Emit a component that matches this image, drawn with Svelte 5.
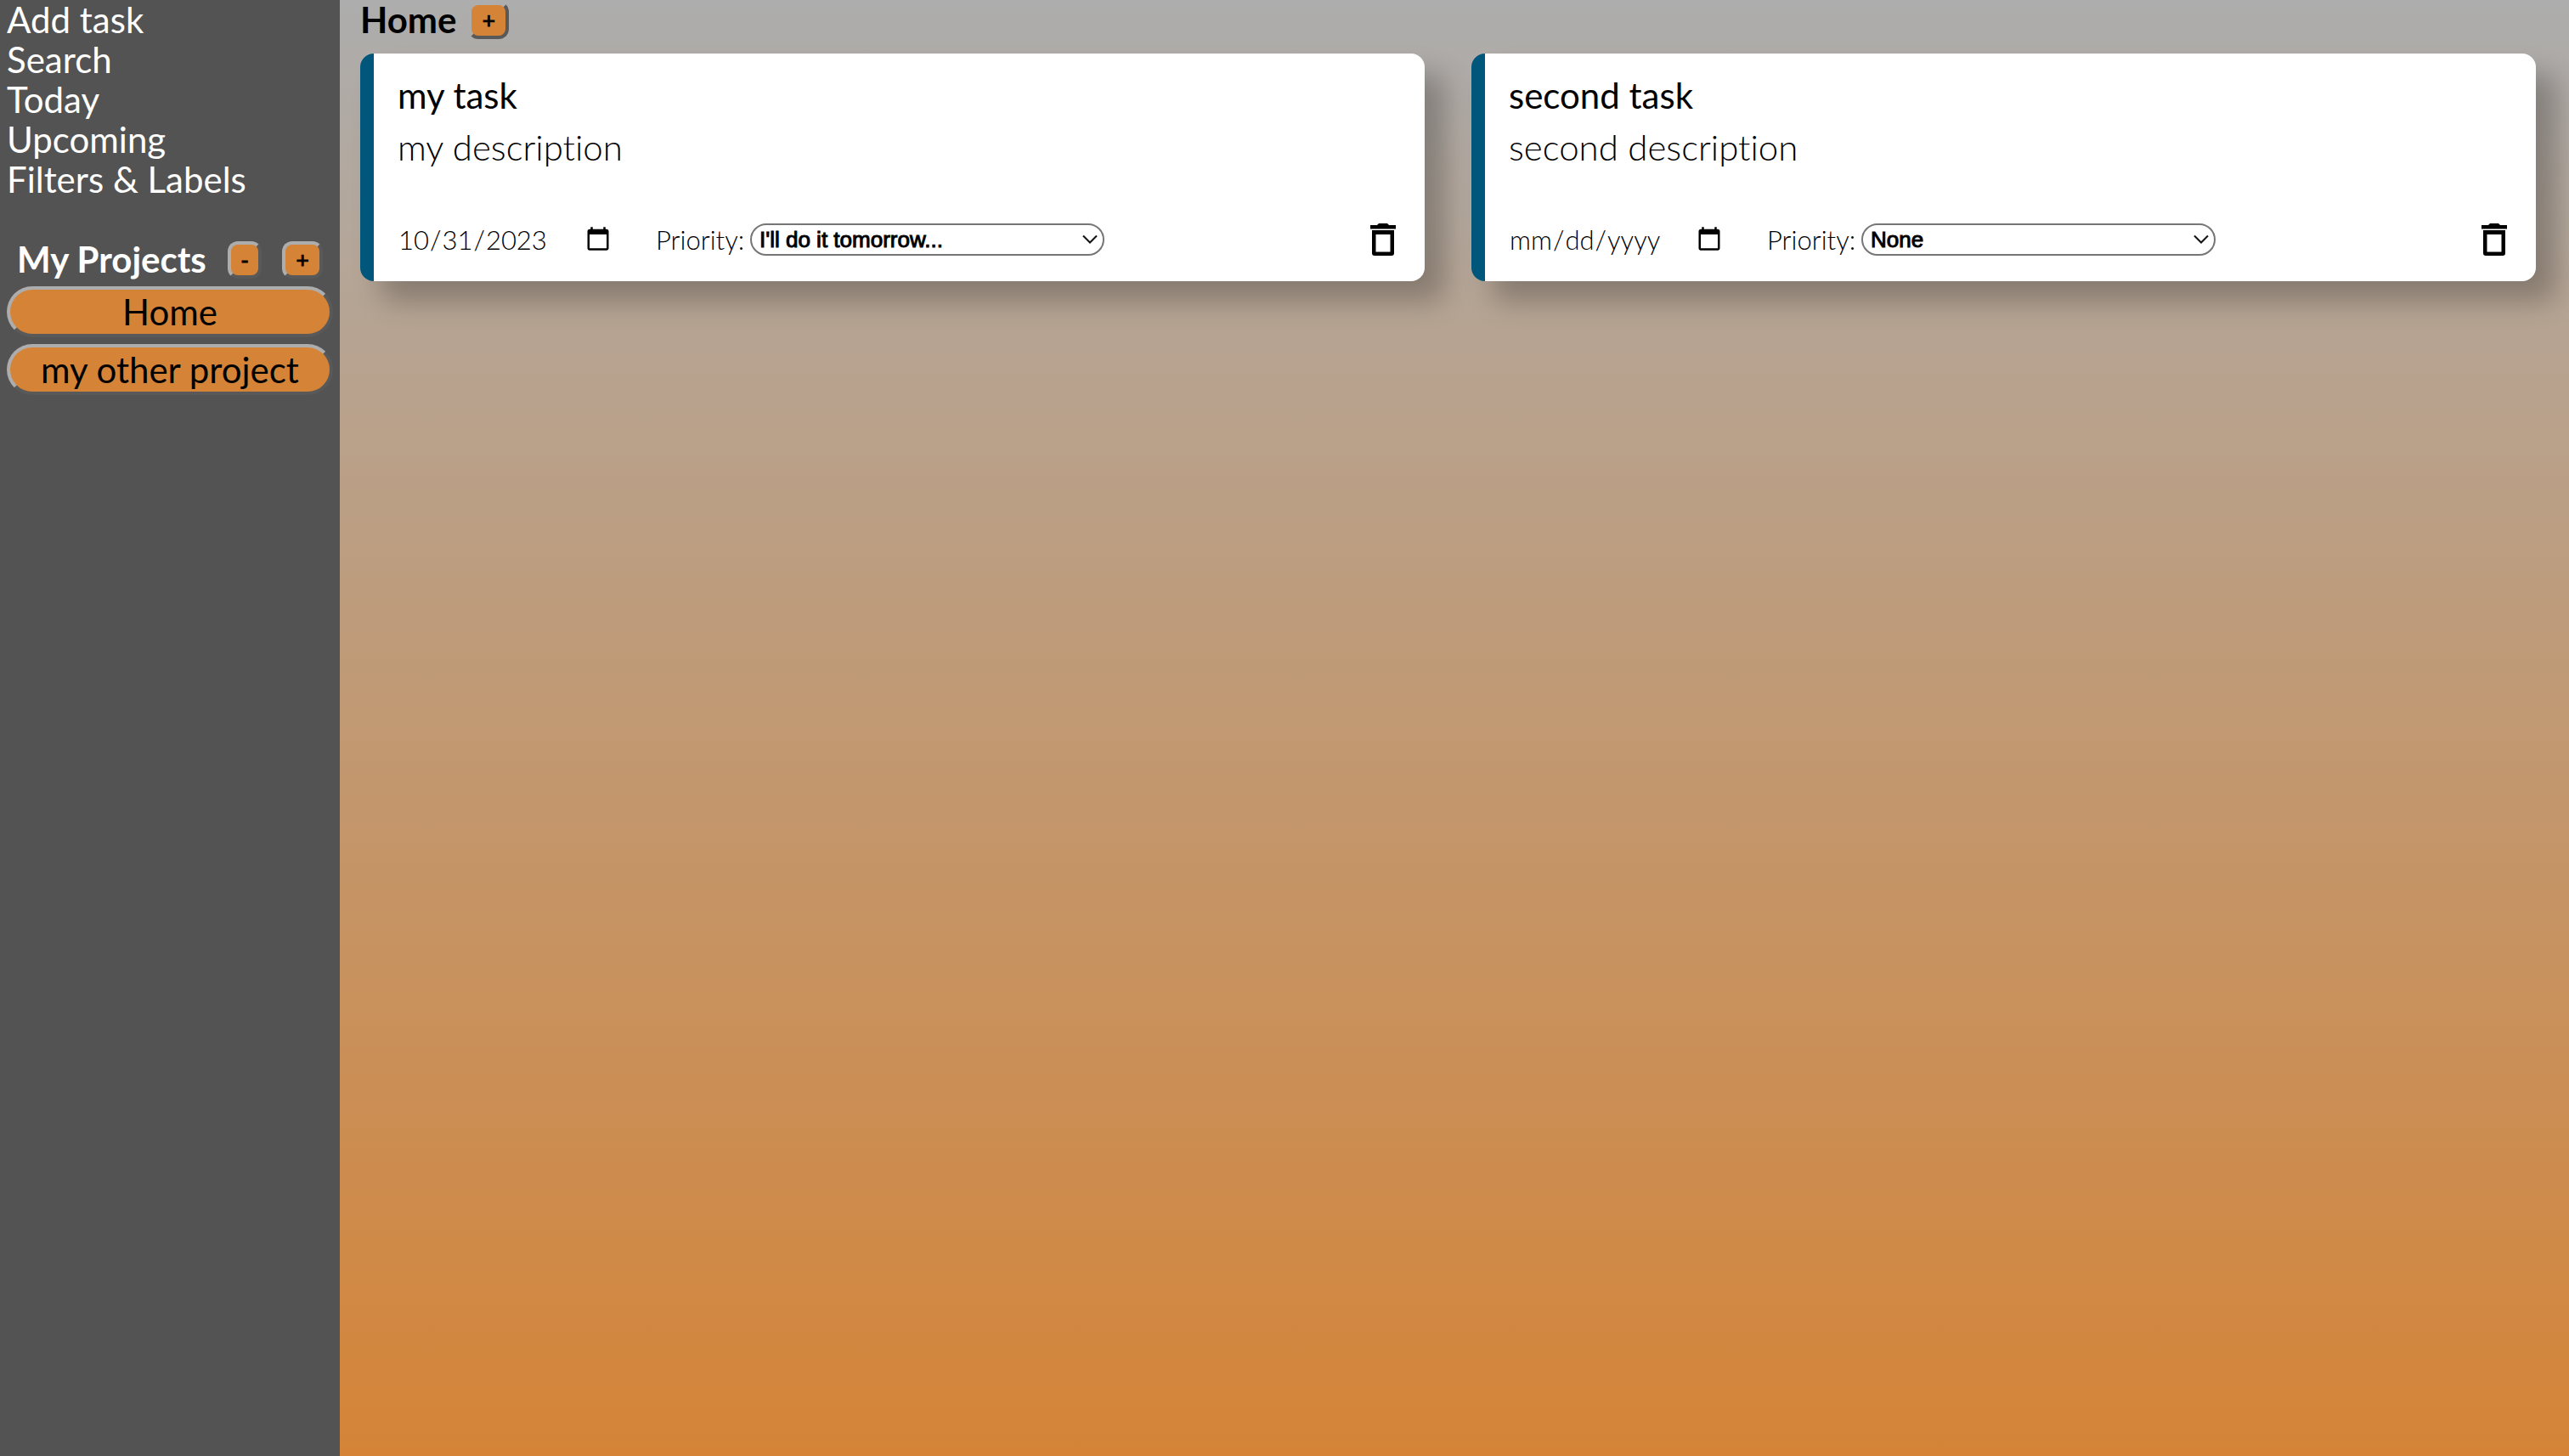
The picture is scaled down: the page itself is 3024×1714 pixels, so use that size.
<script>
  const links = ['Add task', 'Search', 'Today', 'Upcoming', 'Filters & Labels'];
  const projects = ['Home', 'my other project'];
  const priorities = ['None', "I'll do it tomorrow...", 'Soon', 'Urgent'];

  let tasks = $state([
    { id: 1, title: 'my task', description: 'my description', due: '2023-10-31', priority: "I'll do it tomorrow..." },
    { id: 2, title: 'second task', description: 'second description', due: '', priority: 'None' }
  ]);
</script>

<div class="app">
  <aside class="sidebar">
    <nav class="links" aria-label="Main">
      {#each links as link}
        <a href="#top">{link}</a>
      {/each}
    </nav>

    <div class="projects-head">
      <h2>My Projects</h2>
      <button class="square minus" type="button" aria-label="Remove project">-</button>
      <button class="square" type="button" aria-label="Add project">+</button>
    </div>

    <div class="projects">
      {#each projects as project}
        <button class="project" type="button">{project}</button>
      {/each}
    </div>
  </aside>

  <main class="content">
    <header class="content-head">
      <h1>Home</h1>
      <button class="square" type="button" aria-label="Add task to project">+</button>
    </header>

    <section class="cards">
      {#each tasks as task (task.id)}
        <article class="card">
          <h3>{task.title}</h3>
          <p class="description">{task.description}</p>
          <div class="card-foot">
            <input class="date" type="date" aria-label="Due date" bind:value={task.due} />
            <label class="priority-label" for="priority-{task.id}">Priority:</label>
            <span class="select-wrap">
              <select id="priority-{task.id}" bind:value={task.priority}>
                {#each priorities as priority}
                  <option value={priority}>{priority}</option>
                {/each}
              </select>
              <svg class="chevron" viewBox="0 0 18 12" aria-hidden="true">
                <path d="M1 1.5 L9 9.5 L17 1.5" fill="none" stroke="#111" stroke-width="2" />
              </svg>
            </span>
            <button class="delete" type="button" aria-label="Delete task">
              <svg viewBox="0 0 30 38" aria-hidden="true">
                <path d="M0 2 H8 L10 0 H20 L22 2 H30 V6.5 H0 Z" />
                <path
                  fill-rule="evenodd"
                  d="M2 8 H28 V35 Q28 38 25 38 H5 Q2 38 2 35 Z M6.5 13 V33.5 H23.5 V13 Z"
                />
              </svg>
            </button>
          </div>
        </article>
      {/each}
    </section>
  </main>
</div>

<style>
  :global(body) {
    margin: 0;
  }

  .app {
    display: flex;
    min-height: 100vh;
    font-family: Lato, 'Liberation Sans', sans-serif;
    font-size: 42px;
    font-variant-ligatures: none;
    line-height: 47px;
    color: #000;
    background: linear-gradient(#adadad, #d58437);
  }

  h1,
  h2,
  h3,
  p {
    margin: 0;
    font-size: 42px;
  }

  h1,
  h2 {
    font-weight: 700;
  }

  button {
    box-sizing: border-box;
    font-family: inherit;
    color: #000;
    cursor: pointer;
  }

  .sidebar {
    box-sizing: border-box;
    flex: 0 0 400px;
    min-width: 0;
    padding: 0 8px;
    background: #535353;
    color: #fff;
  }

  .links {
    display: flex;
    flex-direction: column;
  }

  .links a {
    color: inherit;
    text-decoration: none;
  }

  .projects-head {
    display: flex;
    align-items: center;
    gap: 24px;
    padding: 47px 12px 8px 12px;
  }

  .projects-head h2 {
    flex: 1;
    min-width: 0;
    white-space: nowrap;
  }

  .square {
    flex: none;
    width: 48px;
    height: 44px;
    padding: 0;
    border: 4px solid;
    border-color: #adadad #595959 #595959 #adadad;
    border-radius: 12px;
    background: #d58437;
    font-family: 'Liberation Sans', Arial, sans-serif;
    font-size: 26px;
    line-height: 30px;
    -webkit-text-stroke: 1px #000;
  }

  .minus {
    width: 40px;
  }

  .projects {
    display: flex;
    flex-direction: column;
    gap: 8px;
  }

  .project {
    height: 60px;
    padding: 0 16px;
    border: 4px solid;
    border-color: #adadad #595959 #595959 #adadad;
    border-radius: 30px;
    background: #d58437;
    font-size: 42px;
    line-height: 47px;
    white-space: nowrap;
  }

  .content {
    flex: 1;
    min-width: 0;
    padding: 0 39px 64px 24px;
  }

  .content-head {
    display: flex;
    align-items: center;
    gap: 14px;
  }

  .cards {
    display: grid;
    grid-template-columns: repeat(2, minmax(0, 1fr));
    gap: 55px;
    padding-top: 16px;
  }

  .card {
    padding: 26px 34px 29px 28px;
    border-left: 16px solid #00577b;
    border-radius: 16px;
    background: #fff;
    box-shadow: 24px 24px 32px rgba(0, 0, 0, 0.25);
  }

  .card h3 {
    font-weight: 400;
  }

  .description {
    padding-top: 14px;
    font-weight: 300;
  }

  .card-foot {
    display: flex;
    align-items: center;
    padding-top: 65px;
    font-size: 31px;
    font-weight: 300;
    line-height: 40px;
  }

  .date {
    box-sizing: border-box;
    width: 252px;
    height: 40px;
    margin: 0 52px 0 0;
    padding: 0;
    border: 0;
    background: none;
    font: inherit;
    color: inherit;
  }

  .date::-webkit-datetime-edit,
  .date::-webkit-datetime-edit-fields-wrapper {
    padding: 0;
  }

  .date::-webkit-calendar-picker-indicator {
    width: 32px;
    height: 32px;
    margin: 0;
    padding: 0;
  }

  .priority-label {
    flex: 0 0 111px;
  }

  .select-wrap {
    display: grid;
    flex: 0 1 417px;
    align-items: center;
  }

  select {
    grid-area: 1 / 1;
    box-sizing: border-box;
    width: 100%;
    height: 38px;
    padding: 0 40px 0 9px;
    appearance: none;
    border: 2px solid #767676;
    border-radius: 20px;
    background: #fff;
    color: #000;
    font-family: 'Liberation Sans', Arial, sans-serif;
    font-size: 26px;
    -webkit-text-stroke: 1px #000;
  }

  .chevron {
    grid-area: 1 / 1;
    justify-self: end;
    width: 18px;
    height: 12px;
    margin-right: 8px;
    pointer-events: none;
  }

  .delete {
    display: flex;
    margin-left: auto;
    padding: 0;
    border: 0;
    background: none;
  }

  .delete svg {
    width: 30px;
    height: 38px;
  }

  @media (max-width: 1900px) {
    .cards {
      grid-template-columns: minmax(0, 1fr);
    }
  }
</style>
